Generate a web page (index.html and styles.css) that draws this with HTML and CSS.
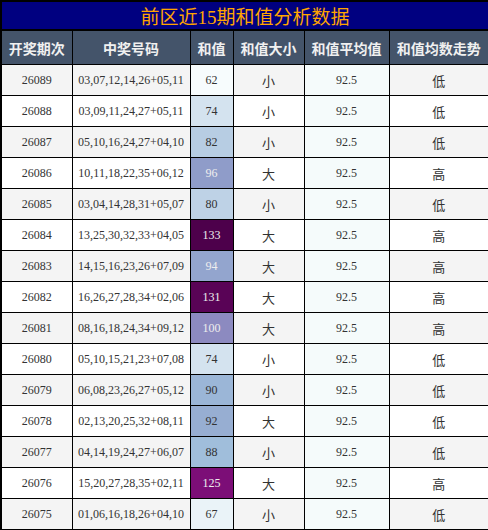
FILE: index.html
```html
<!DOCTYPE html>
<html lang="zh">
<head>
    <meta charset="UTF-8">
    <meta name="viewport" content="width=device-width, initial-scale=1.0">
    <title>前区近15期和值分析数据</title>
    <link rel="stylesheet" href="styles.css">
</head>
<body>

    <table class="sum-table">
        <colgroup>
            <col class="c-issue">
            <col class="c-nums">
            <col class="c-sum">
            <col class="c-size">
            <col class="c-avg">
            <col class="c-trend">
        </colgroup>
        <thead>
            <tr class="title-row">
                <th colspan="6">前区近15期和值分析数据</th>
            </tr>
            <tr class="head-row">
                <th>开奖期次</th>
                <th>中奖号码</th>
                <th>和值</th>
                <th>和值大小</th>
                <th>和值平均值</th>
                <th>和值均数走势</th>
            </tr>
        </thead>
        <tbody>
            <tr><td>26089</td><td>03,07,12,14,26+05,11</td><td class="sum" style="background:#f7fcfd">62</td><td class="cn">小</td><td class="avg">92.5</td><td class="cn">低</td></tr>
            <tr><td>26088</td><td>03,09,11,24,27+05,11</td><td class="sum" style="background:#d4e3ef">74</td><td class="cn">小</td><td class="avg">92.5</td><td class="cn">低</td></tr>
            <tr><td>26087</td><td>05,10,16,24,27+04,10</td><td class="sum" style="background:#b7cde3">82</td><td class="cn">小</td><td class="avg">92.5</td><td class="cn">低</td></tr>
            <tr><td>26086</td><td>10,11,18,22,35+06,12</td><td class="sum light" style="background:#8f9cc9">96</td><td class="cn">大</td><td class="avg">92.5</td><td class="cn">高</td></tr>
            <tr><td>26085</td><td>03,04,14,28,31+05,07</td><td class="sum" style="background:#bed2e6">80</td><td class="cn">小</td><td class="avg">92.5</td><td class="cn">低</td></tr>
            <tr><td>26084</td><td>13,25,30,32,33+04,05</td><td class="sum light" style="background:#4d004b">133</td><td class="cn">大</td><td class="avg">92.5</td><td class="cn">高</td></tr>
            <tr><td>26083</td><td>14,15,16,23,26+07,09</td><td class="sum light" style="background:#93a5ce">94</td><td class="cn">大</td><td class="avg">92.5</td><td class="cn">高</td></tr>
            <tr><td>26082</td><td>16,26,27,28,34+02,06</td><td class="sum light" style="background:#590356">131</td><td class="cn">大</td><td class="avg">92.5</td><td class="cn">高</td></tr>
            <tr><td>26081</td><td>08,16,18,24,34+09,12</td><td class="sum light" style="background:#8c8ac0">100</td><td class="cn">大</td><td class="avg">92.5</td><td class="cn">高</td></tr>
            <tr><td>26080</td><td>05,10,15,21,23+07,08</td><td class="sum" style="background:#d4e3ef">74</td><td class="cn">小</td><td class="avg">92.5</td><td class="cn">低</td></tr>
            <tr><td>26079</td><td>06,08,23,26,27+05,12</td><td class="sum" style="background:#9bb6d7">90</td><td class="cn">小</td><td class="avg">92.5</td><td class="cn">低</td></tr>
            <tr><td>26078</td><td>02,13,20,25,32+08,11</td><td class="sum" style="background:#97aed2">92</td><td class="cn">大</td><td class="avg">92.5</td><td class="cn">低</td></tr>
            <tr><td>26077</td><td>04,14,19,24,27+06,07</td><td class="sum" style="background:#a0bedb">88</td><td class="cn">小</td><td class="avg">92.5</td><td class="cn">低</td></tr>
            <tr><td>26076</td><td>15,20,27,28,35+02,11</td><td class="sum light" style="background:#7c0e77">125</td><td class="cn">大</td><td class="avg">92.5</td><td class="cn">高</td></tr>
            <tr><td>26075</td><td>01,06,16,18,26+04,10</td><td class="sum" style="background:#eaf3f8">67</td><td class="cn">小</td><td class="avg">92.5</td><td class="cn">低</td></tr>
        </tbody>
    </table>

</body>
</html>
```

FILE: styles.css
```css
body {
    margin: 0;
    background-color: white;
    font-family: "Liberation Serif", "Noto Sans CJK SC", serif;
}
.sum-table {
    width: 488px;
    table-layout: fixed;
    border-collapse: collapse;
    border: 2px solid black;
}
.c-issue { width: 71px; }
.c-nums { width: 118px; }
.c-sum { width: 43px; }
.c-size { width: 71px; }
.c-avg { width: 85px; }
.c-trend { width: 100px; }
.sum-table th,
.sum-table td {
    border: 1px solid black;
    text-align: center;
    padding: 0;
}
.title-row th {
    height: 26px;
    background-color: #000080;
    color: #ffa500;
    font-size: 19px;
    font-weight: normal;
    border-bottom: 2px solid black;
}
.head-row th {
    height: 33px;
    background-color: #44546a;
    color: #f0f0f0;
    font-family: "Noto Sans CJK SC", sans-serif;
    font-size: 14px;
    font-weight: bold;
}
.sum-table td {
    height: 30px;
    font-size: 12px;
    color: #333;
    background-color: white;
}
.sum-table tbody tr:nth-child(odd) td {
    background-color: #f4f4f4;
}
.sum-table tbody tr td.avg {
    background-color: #f5fbfb;
}
.sum-table td.cn {
    font-family: "Noto Sans CJK SC", sans-serif;
    font-size: 13px;
}
.sum-table td.light {
    color: #eeeeee;
}
```
